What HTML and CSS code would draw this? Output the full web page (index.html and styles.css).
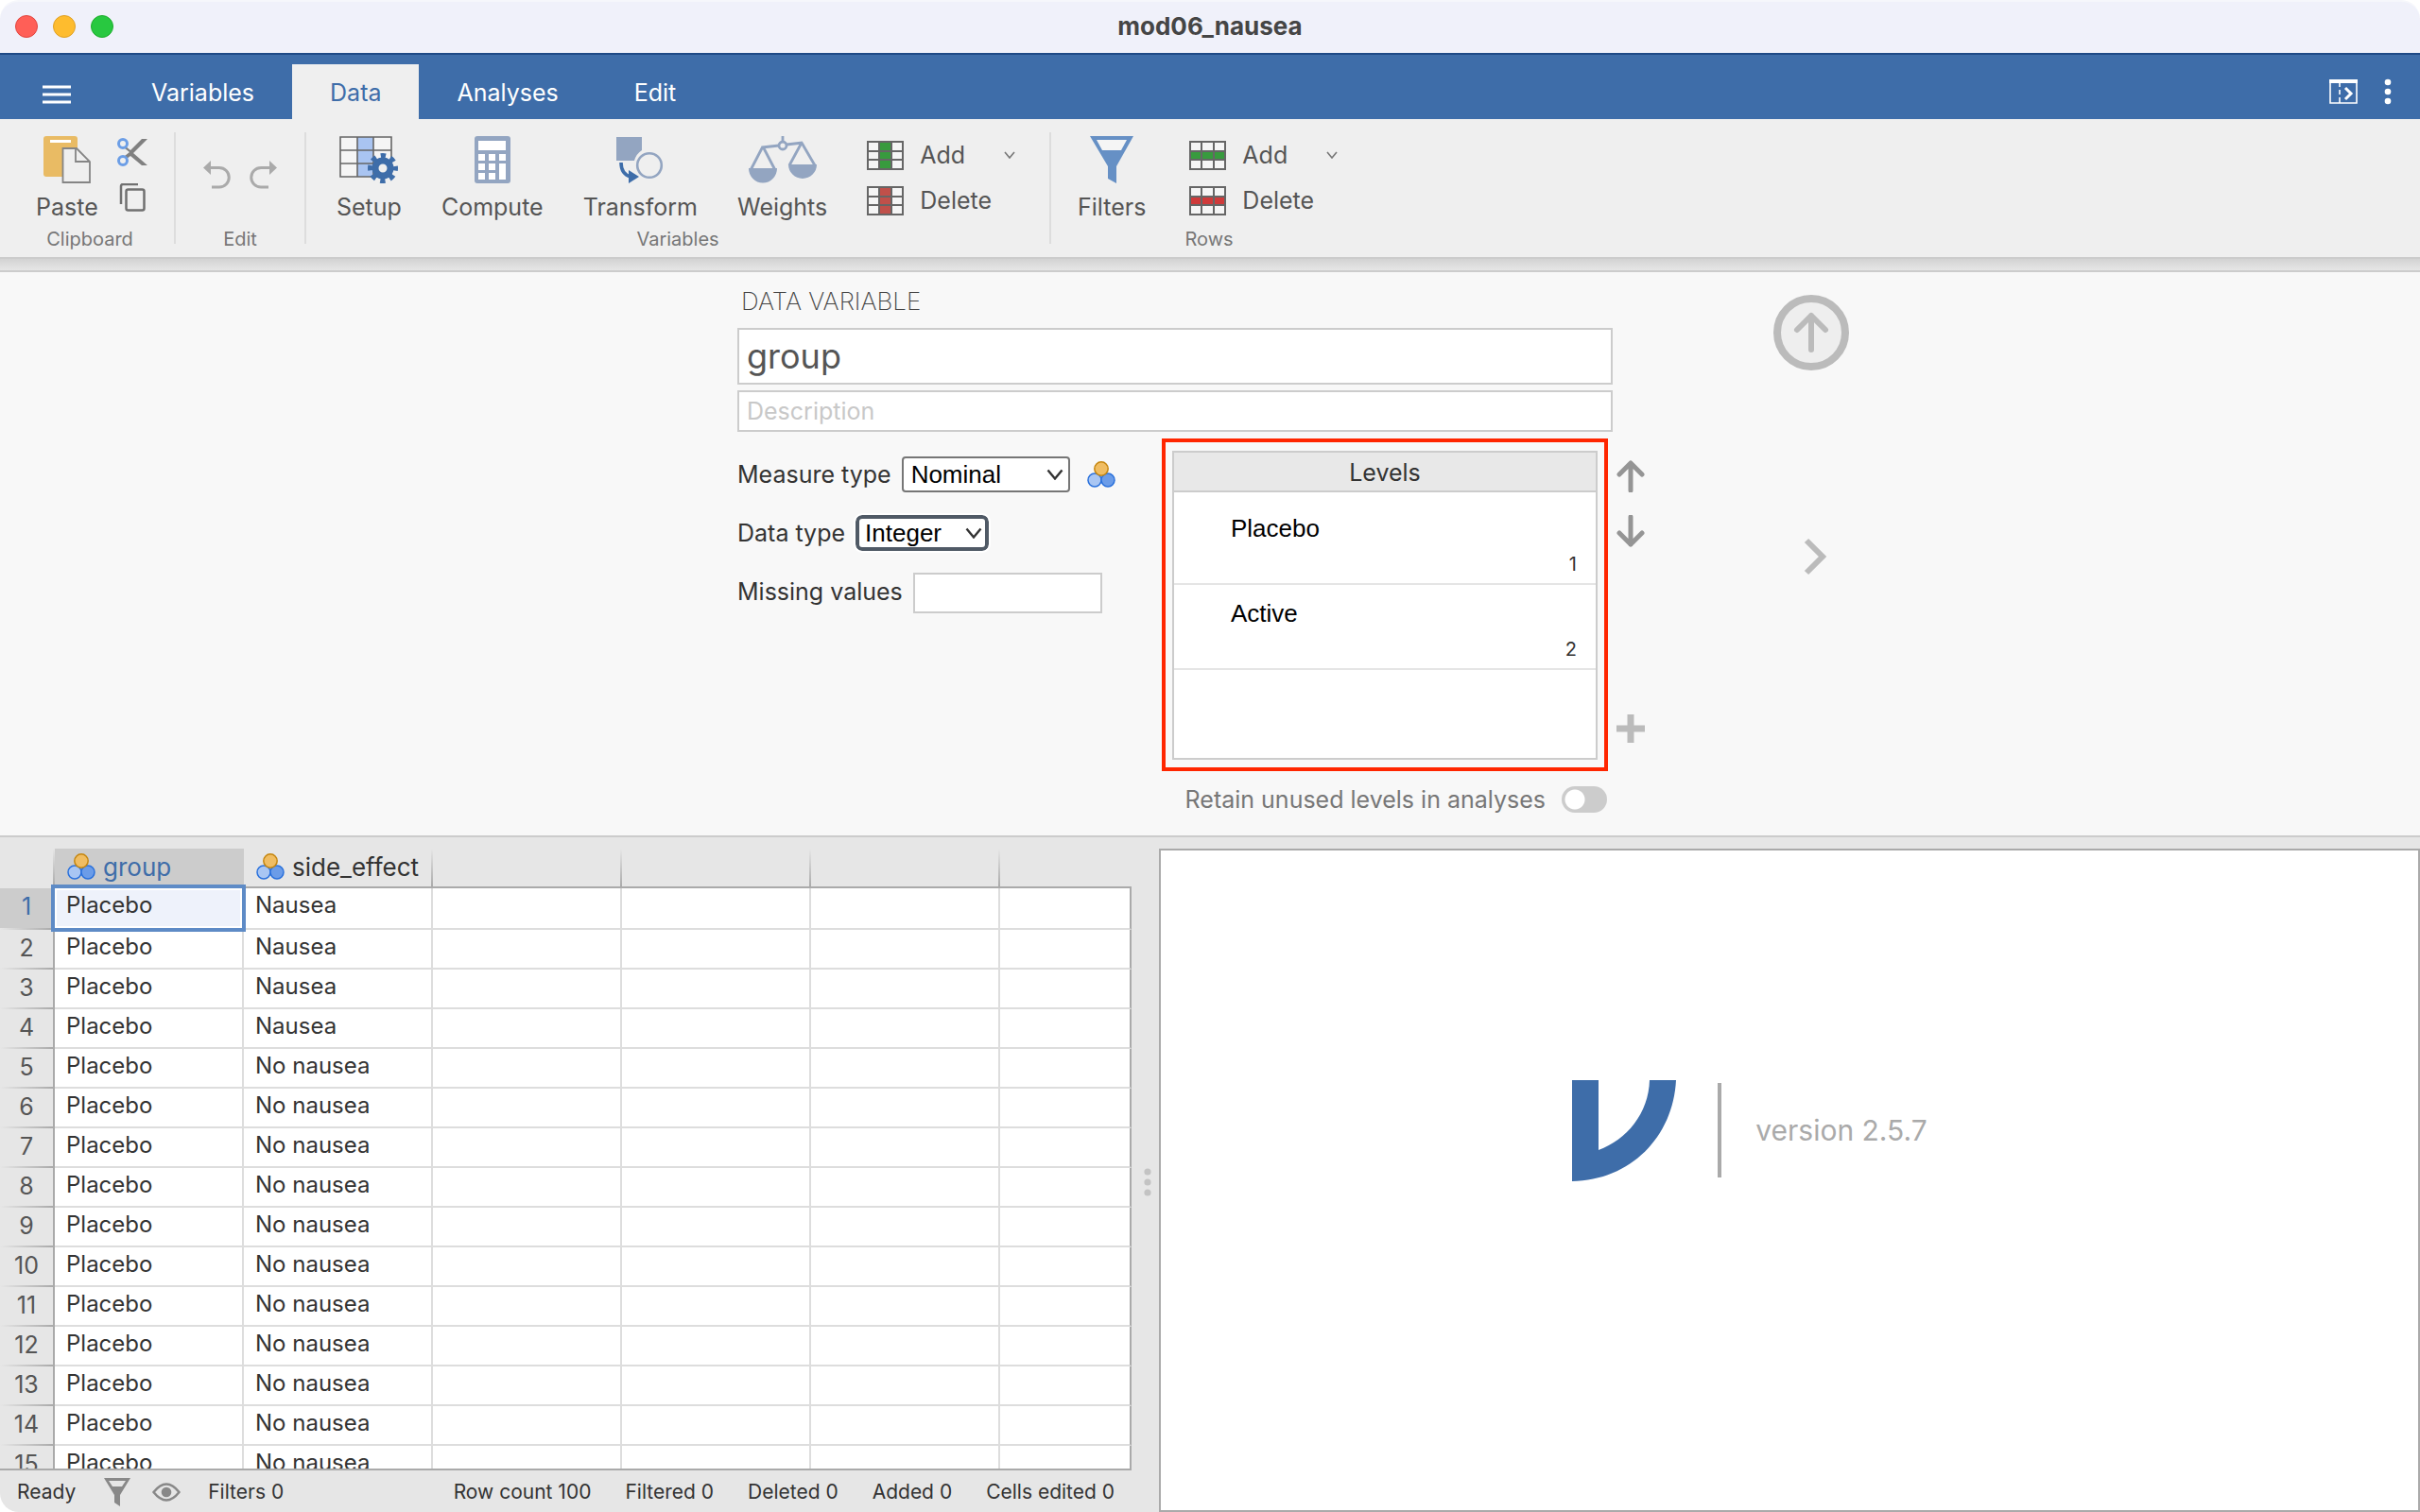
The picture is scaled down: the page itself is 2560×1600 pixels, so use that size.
FILE: index.html
```html
<!DOCTYPE html>
<html lang="en">
<head>
  <meta charset="UTF-8" />
  <meta name="viewport" content="width=device-width, initial-scale=1" />
  <title>mod06_nausea</title>
  <link rel="stylesheet" href="styles.css">
</head>
<body>

  <!-- shared icons -->
  <svg class="defs" width="0" height="0" aria-hidden="true">
    <symbol id="nominal" viewBox="0 0 30 28">
      <circle cx="8" cy="20" r="7" fill="#a9c6f3" stroke="#2a71dc" stroke-width="1.5"/>
      <circle cx="22" cy="20" r="7" fill="#6b9ce8" stroke="#2a71dc" stroke-width="1.5"/>
      <circle cx="15" cy="8" r="7.2" fill="#f0bd62" stroke="#c5860f" stroke-width="1.5"/>
    </symbol>
    <symbol id="chevron" viewBox="0 0 12 8">
      <path d="M1 1l5 6 5-6" fill="none" stroke="currentColor" stroke-width="1.6"/>
    </symbol>
    <symbol id="grid" viewBox="0 0 39 31">
      <path d="M1 1h37v29H1zM1 11h37M1 20h37M13 1v29M26 1v29" fill="none" stroke="#666" stroke-width="2"/>
    </symbol>
  </svg>

  <header class="titlebar">
    <div class="lights">
      <span class="light red"></span>
      <span class="light yellow"></span>
      <span class="light green"></span>
    </div>
    <h1>mod06_nausea</h1>
  </header>

  <nav class="tabs" aria-label="Main">
    <button class="menu" aria-label="Menu">
      <svg width="30" height="20" viewBox="0 0 30 20"><path d="M0 2h30M0 10h30M0 18h30" stroke="#fff" stroke-width="3"/></svg>
    </button>
    <button class="tab">Variables</button>
    <button class="tab active">Data</button>
    <button class="tab">Analyses</button>
    <button class="tab">Edit</button>
    <div class="tab-tools">
      <button aria-label="Toggle results">
        <svg width="30" height="26" viewBox="0 0 30 26"><path d="M1 1v24h28V1M11 4v4M11 11v5M11 19v6" fill="none" stroke="#fff" stroke-width="1.6"/><path d="M0 2h30" stroke="#fff" stroke-width="4"/><path d="M17 9l6 6-6 6" fill="none" stroke="#fff" stroke-width="3"/></svg>
      </button>
      <button aria-label="More">
        <svg width="8" height="28" viewBox="0 0 8 28" fill="#fff"><circle cx="4" cy="4" r="3.3"/><circle cx="4" cy="14" r="3.3"/><circle cx="4" cy="24" r="3.3"/></svg>
      </button>
    </div>
  </nav>

  <div class="toolbar">
    <section class="tool-group clipboard">
      <div class="tools">
        <button class="tool">
          <svg width="50" height="50" viewBox="0 0 50 50"><path d="M3 0h30a3 3 0 0 1 3 3v37a3 3 0 0 1-3 3H3a3 3 0 0 1-3-3V3a3 3 0 0 1 3-3z" fill="#e9bb64"/><path d="M7 5.500h22" stroke="#fff" stroke-width="3"/><path d="M20.500 13H35l14 14v22H20.500z" fill="#efefef" stroke="#858585" stroke-width="1.800"/><path d="M34 13v14h15" fill="none" stroke="#858585" stroke-width="1.800"/></svg>
          Paste
        </button>
        <div class="stack">
          <button aria-label="Cut">
            <svg width="32" height="30" viewBox="0 0 32 30"><path d="M9 9l5 4L26 1h6L17 16l15 13h-6L14 19l-4 3-2-3 5-4-5-4z" fill="#808080"/><circle cx="6" cy="6" r="4.500" fill="none" stroke="#6c9ee6" stroke-width="3"/><circle cx="6" cy="24" r="4.500" fill="none" stroke="#6c9ee6" stroke-width="3"/></svg>
          </button>
          <button aria-label="Copy">
            <svg width="32" height="30" viewBox="0 0 32 30"><path d="M4 22V3a2 2 0 0 1 2-2H22" fill="none" stroke="#707070" stroke-width="2.500"/><rect x="9.500" y="6.500" width="19" height="22" rx="2" fill="none" stroke="#707070" stroke-width="2.500"/></svg>
          </button>
        </div>
      </div>
      <h2>Clipboard</h2>
    </section>

    <section class="tool-group edit">
      <div class="tools">
        <button aria-label="Undo"><svg width="30" height="30" viewBox="0 0 30 30"><path d="M5 7.500h12a10 10 0 0 1 0 20.500H9" fill="none" stroke="#aaa" stroke-width="3"/><path d="M0 7.500L8 0v15z" fill="#aaa"/></svg></button>
        <button aria-label="Redo"><svg width="30" height="30" viewBox="0 0 30 30"><path d="M25 7.500H13a10 10 0 0 0 0 20.500h8" fill="none" stroke="#aaa" stroke-width="3"/><path d="M30 7.500L22 0v15z" fill="#aaa"/></svg></button>
      </div>
      <h2>Edit</h2>
    </section>

    <section class="tool-group variables">
      <div class="tools">
        <button class="tool">
          <svg width="62" height="50" viewBox="0 0 62 50"><path d="M1 1h54v42H1z" fill="#f5f5f5"/><path d="M19 1h17v42H19z" fill="#a9c4f1"/><path d="M1 1h54v42H1zM1 15h54M1 29h54M19 1v42M36 1v42" fill="none" stroke="#666" stroke-width="1.600"/><circle cx="46" cy="34" r="8" fill="#efefef" stroke="#3e6da9" stroke-width="7"/><circle cx="46" cy="34" r="13" fill="none" stroke="#3e6da9" stroke-width="6" stroke-dasharray="5.200 5.010" stroke-dashoffset="2.600"/></svg>
          Setup
        </button>
        <button class="tool">
          <svg width="38" height="50" viewBox="0 0 38 50"><rect width="38" height="50" rx="3" fill="#93a5c1"/><path d="M4 5h29v10H4zM4 19h7v7H4zM15 19h7v7h-7zM26 19h7v7h-7zM4 29h7v7H4zM15 29h7v7h-7zM26 29h7v17h-7zM4 39h7v7H4zM15 39h7v7h-7z" fill="#fff"/></svg>
          Compute
        </button>
        <button class="tool">
          <svg width="50" height="50" viewBox="0 0 50 50"><path d="M0 1h27v14a19 19 0 0 0-8 11H0z" fill="#93a5c1"/><circle cx="35" cy="31" r="12.800" fill="none" stroke="#93a5c1" stroke-width="2.600"/><path d="M5 28c0 8 3 13 10 15" fill="none" stroke="#3e6da9" stroke-width="3.600"/><path d="M13 36l11 7-11 7z" fill="#3e6da9"/></svg>
          Transform
        </button>
        <button class="tool">
          <svg width="72" height="50" viewBox="0 0 72 50"><g fill="none" stroke="#93a5c1" stroke-width="2.800"><path d="M36 0v7M14 12l18-2M40 9l17-2M15 11L2 36M15 11l13 25M56 7L43 31M56 7l14 24"/><circle cx="36" cy="10" r="4"/></g><path d="M0 34h30a15 15.500 0 0 1-30 0zM42 30h30a15 15 0 0 1-30 0z" fill="#93a5c1"/></svg>
          Weights
        </button>
        <div class="stack wide">
          <button class="row-tool"><svg width="39" height="31" viewBox="0 0 39 31"><path d="M1 1h37v29H1z" fill="#f5f5f5"/><path d="M13 1h13v29H13z" fill="#389b3e"/><use href="#grid"/></svg>Add <svg class="drop" width="12" height="8"><use href="#chevron"/></svg></button>
          <button class="row-tool"><svg width="39" height="31" viewBox="0 0 39 31"><path d="M1 1h37v29H1z" fill="#f5f5f5"/><path d="M13 1h13v29H13z" fill="#c0504a"/><use href="#grid"/></svg>Delete</button>
        </div>
      </div>
      <h2>Variables</h2>
    </section>

    <section class="tool-group rows">
      <div class="tools">
        <button class="tool">
          <svg width="46" height="50" viewBox="0 0 46 50"><path d="M0 0h46L28 32v18l-9-5V32z" fill="#6690c5"/><path d="M7 4h32l-6 11H13z" fill="#f5f5f5"/></svg>
          Filters
        </button>
        <div class="stack wide">
          <button class="row-tool"><svg width="39" height="31" viewBox="0 0 39 31"><path d="M1 1h37v29H1z" fill="#f5f5f5"/><path d="M1 11h37v9H1z" fill="#389b3e"/><use href="#grid"/></svg>Add <svg class="drop" width="12" height="8"><use href="#chevron"/></svg></button>
          <button class="row-tool"><svg width="39" height="31" viewBox="0 0 39 31"><path d="M1 1h37v29H1z" fill="#f5f5f5"/><path d="M1 11h37v9H1z" fill="#cf3a3a"/><use href="#grid"/></svg>Delete</button>
        </div>
      </div>
      <h2>Rows</h2>
    </section>
  </div>
  <div class="shade"></div>

  <section class="editor">
    <div class="editor-main">
      <h2>DATA VARIABLE</h2>
      <input class="name" type="text" aria-label="Name" value="group">
      <input class="description" type="text" aria-label="Description" placeholder="Description">
      <div class="settings">
        <div class="fields">
          <div class="field">
            <label for="measure">Measure type</label>
            <div class="select measure">
              <select id="measure"><option>Nominal</option><option>Ordinal</option><option>Continuous</option><option>ID</option></select>
              <svg width="18" height="12"><use href="#chevron"/></svg>
            </div>
            <svg class="type-icon" width="30" height="28"><use href="#nominal"/></svg>
          </div>
          <div class="field">
            <label for="dtype">Data type</label>
            <div class="select dtype">
              <select id="dtype"><option>Integer</option><option>Decimal</option><option>Text</option></select>
              <svg width="18" height="12"><use href="#chevron"/></svg>
            </div>
          </div>
          <div class="field">
            <label for="missing">Missing values</label>
            <input id="missing" class="missing" type="text">
          </div>
        </div>

        <div class="levels-side">
          <div class="levels-mark">
            <div class="levels">
              <h3>Levels</h3>
              <div class="level"><span>Placebo</span><small>1</small></div>
              <div class="level"><span>Active</span><small>2</small></div>
            </div>
          </div>
          <div class="retain">
            <label for="retain">Retain unused levels in analyses</label>
            <input id="retain" type="checkbox" role="switch">
          </div>
        </div>

        <div class="level-tools">
          <button aria-label="Move up"><svg width="30" height="34" viewBox="0 0 30 34"><path d="M15 32V3M3 15L15 3l12 12" fill="none" stroke="#959595" stroke-width="5" stroke-linecap="round" stroke-linejoin="round"/></svg></button>
          <button aria-label="Move down"><svg width="30" height="34" viewBox="0 0 30 34"><path d="M15 2v29M3 19l12 12 12-12" fill="none" stroke="#959595" stroke-width="5" stroke-linecap="round" stroke-linejoin="round"/></svg></button>
          <button class="add-level" aria-label="Add level"><svg width="30" height="30" viewBox="0 0 30 30"><path d="M15 0v30M0 15h30" stroke="#bbb" stroke-width="7"/></svg></button>
        </div>
      </div>
    </div>

    <div class="editor-nav">
      <button class="close" aria-label="Close"><svg width="80" height="80" viewBox="0 0 80 80"><circle cx="40" cy="40" r="36" fill="#eee" stroke="#bbb" stroke-width="8"/><path d="M40 58V22M25 37l15-15 15 15" fill="none" stroke="#bbb" stroke-width="6" stroke-linecap="round" stroke-linejoin="round"/></svg></button>
      <button aria-label="Next"><svg width="34" height="40" viewBox="0 0 34 40"><path d="M12 3l17 17-17 17" fill="none" stroke="#bbb" stroke-width="6"/></svg></button>
    </div>
  </section>

  <main class="split">
    <div class="data">
      <div class="sheet">
        <table>
          <colgroup><col class="num-col"><col class="var-col"><col class="var-col"><col class="var-col"><col class="var-col"><col class="var-col"><col></colgroup>
          <thead>
            <tr>
              <th></th>
              <th class="active"><svg width="30" height="28"><use href="#nominal"/></svg>group</th>
              <th><svg width="30" height="28"><use href="#nominal"/></svg>side_effect</th>
              <th></th><th></th><th></th><th></th>
            </tr>
          </thead>
          <tbody id="rows"></tbody>
        </table>
      </div>
      <footer class="status">
        <span>Ready</span>
        <svg class="funnel" width="28" height="30" viewBox="0 0 28 30"><path d="M0 0h28L17 18v12l-6-4v-8z" fill="#888"/><path d="M5 3h18l-4 6H9z" fill="#e6e6e6"/></svg>
        <svg class="eye" width="30" height="20" viewBox="0 0 30 20"><path d="M1.500 10Q15-7 28.500 10 15 27 1.500 10z" fill="none" stroke="#888" stroke-width="2.500"/><circle cx="15" cy="10" r="5.300" fill="#888"/></svg>
        <span>Filters 0</span>
        <div class="counts">
          <span>Row count 100</span>
          <span>Filtered 0</span>
          <span>Deleted 0</span>
          <span>Added 0</span>
          <span>Cells edited 0</span>
        </div>
      </footer>
    </div>

    <div class="splitter">
      <svg width="8" height="30" viewBox="0 0 8 30" fill="#c3c3c3"><circle cx="4" cy="4" r="3.600"/><circle cx="4" cy="15" r="3.600"/><circle cx="4" cy="26" r="3.600"/></svg>
    </div>

    <div class="results">
      <svg width="110" height="107" viewBox="0 0 110 107"><path d="M0 0h28v74C58 63 81 35 82 0h28C107 60 62 106 0 107z" fill="#3e6da9"/></svg>
      <p>version 2.5.7</p>
    </div>
  </main>

  <script>
    const labels = ['Nausea', 'Nausea', 'Nausea', 'Nausea'];
    const body = document.getElementById('rows');
    for (let i = 0; i < 15; i++) {
      const tr = document.createElement('tr');
      if (i === 0) tr.className = 'current';
      tr.innerHTML = `
        <th scope="row">${i + 1}</th>
        <td>Placebo</td>
        <td>${labels[i] || 'No nausea'}</td>
        <td></td><td></td><td></td><td></td>
      `;
      body.appendChild(tr);
    }
  </script>
</body>
</html>
```
FILE: styles.css
```css
* {
  box-sizing: border-box;
}
body {
  margin: 0;
  height: 100vh;
  display: flex;
  flex-direction: column;
  overflow: hidden;
  background: #fff;
  color: #333;
  font-family: Inter, 'Liberation Sans', sans-serif;
  font-size: 25px;
  line-height: 32px;
}
button {
  padding: 0;
  border: none;
  background: none;
  color: inherit;
  font: inherit;
  cursor: pointer;
}
svg {
  display: block;
  flex: none;
}
h1, h2, h3, p {
  margin: 0;
  font-weight: 400;
}
.defs {
  position: absolute;
}

/* title bar */
.titlebar {
  display: grid;
  grid-template-columns: 1fr auto 1fr;
  align-items: center;
  height: 56px;
  padding: 0 16px 2px;
  background: #f0f1fa;
  border-top: 2px solid #f6f7fb;
  border-radius: 20px 20px 0 0;
}
.titlebar h1 {
  font-size: 26px;
  font-weight: 700;
  color: #454545;
}
.lights {
  display: flex;
  gap: 16px;
}
.light {
  width: 24px;
  height: 24px;
  border-radius: 50%;
  border: 1px solid #e14640;
  background: #ff5f57;
}
.yellow {
  border-color: #dfa023;
  background: #febc2e;
}
.green {
  border-color: #1dad2b;
  background: #28c840;
}

/* tabs */
.tabs {
  display: flex;
  align-items: flex-end;
  height: 70px;
  background: #3e6da9;
  border-top: 2px solid #1f4a86;
  color: #fff;
}
.tabs .menu {
  width: 120px;
  height: 58px;
  padding: 6px 0 0 45px;
}
.tab {
  height: 58px;
  padding: 2px 40px 0;
}
.tab.active {
  background: #efefef;
  color: #3e6da9;
}
.tab-tools {
  display: flex;
  align-items: center;
  gap: 28px;
  height: 58px;
  margin-left: auto;
  padding-right: 30px;
}

/* toolbar */
.toolbar {
  display: flex;
  height: 148px;
  padding: 14px 0 14px 6px;
  background: #efefef;
  border-bottom: 2px solid #ccc;
  color: #555;
}
.shade {
  height: 12px;
  background: linear-gradient(#d3d3d3, #e6e6e6);
}
.tool-group {
  display: flex;
  flex-direction: column;
  align-items: center;
  justify-content: space-between;
  border-right: 2px solid #ddd;
}
.tool-group:last-child {
  border-right: none;
}
.tool-group h2 {
  font-size: 20px;
  line-height: 10px;
  color: #777;
}
.tools {
  display: flex;
  width: 100%;
  padding: 4px 0 0 32px;
}
.clipboard {
  width: 180px;
}
.clipboard .tools {
  gap: 20px;
}
.edit {
  width: 138px;
}
.edit .tools {
  gap: 18px;
  padding: 30px 0 0 29px;
}
.variables {
  width: 788px;
}
.variables .tools {
  gap: 42px;
}
.rows {
  width: 334px;
}
.rows .tools {
  gap: 46px;
  padding-left: 28px;
}
.tool {
  display: flex;
  flex-direction: column;
  align-items: center;
  gap: 9px;
}
.stack {
  display: flex;
  flex-direction: column;
  gap: 18px;
  padding-top: 2px;
}
.stack.wide {
  gap: 16px;
  padding-top: 4px;
}
.row-tool {
  display: flex;
  align-items: center;
  gap: 17px;
}
.drop {
  margin-left: 24px;
  color: #777;
}

/* variable editor */
.editor {
  display: grid;
  grid-template-columns: 1000px 1fr;
  height: 600px;
  padding: 12px 0 0 calc(50% - 500px);
  border-top: 2px solid #ccc;
  border-bottom: 2px solid #ccc;
  background: #f8f8f8;
}
.editor-main h2 {
  padding: 2px 0 0 4px;
  height: 47px;
  font-size: 26px;
  font-weight: 200;
  line-height: 34px;
  color: #444;
}
.editor-main input[type=text] {
  display: block;
  padding: 0 8px;
  border: 2px solid #ccc;
  background: #fff;
  font-family: inherit;
  font-size: 25px;
  color: #555;
}
.editor-main input.name {
  width: 926px;
  height: 60px;
  font-size: 36px;
}
.editor-main .description {
  width: 926px;
  height: 44px;
  margin-top: 6px;
}
.description::placeholder {
  color: #c8c8c8;
}
.settings {
  display: flex;
  padding-top: 7px;
}
.fields {
  width: 449px;
  padding-top: 19px;
}
.field {
  display: flex;
  align-items: center;
  height: 38px;
  margin-bottom: 24px;
}
.select {
  position: relative;
  margin-left: 11px;
}
.select select {
  appearance: none;
  width: 100%;
  height: 38px;
  padding: 0 8px;
  border: 2px solid #767676;
  border-radius: 4px;
  background: #fff;
  color: #000;
  font: 26px 'Liberation Sans', sans-serif;
}
.select svg {
  position: absolute;
  right: 7px;
  top: 13px;
  pointer-events: none;
}
.measure {
  width: 178px;
}
.dtype {
  width: 141px;
}
.dtype select {
  padding: 0 6px;
  border: 4px solid #505a66;
  border-radius: 7px;
  outline: 2px solid #fff;
}
.type-icon {
  margin-left: 18px;
}
.editor-main .missing {
  width: 200px;
  height: 43px;
  margin: 3px 0 0 11px;
  border-color: #ddd;
}
.levels-mark {
  width: 472px;
  height: 352px;
  padding: 9px 7px;
  border: 4px solid #ff2600;
}
.levels {
  height: 327px;
  border: 2px solid #ccc;
  background: #fff;
}
.levels h3 {
  height: 42px;
  border-bottom: 2px solid #ccc;
  background: #e8e8e8;
  font-size: 25px;
  line-height: 42px;
  text-align: center;
}
.level {
  display: flex;
  flex-direction: column;
  height: 90px;
  padding: 12px 20px 0 60px;
  border-bottom: 2px solid #e5e5e5;
}
.level:nth-child(2) {
  height: 98px;
  padding-top: 20px;
}
.level span {
  color: #000;
  font-family: 'Liberation Sans', sans-serif;
  font-size: 26px;
  line-height: 36px;
}
.level small {
  font-size: 20px;
  line-height: 40px;
  text-align: right;
}
.retain {
  display: flex;
  align-items: center;
  justify-content: flex-end;
  gap: 17px;
  padding: 14px 1px 0 0;
  color: #777;
}
.retain input {
  appearance: none;
  width: 48px;
  height: 28px;
  margin: 0;
  border-radius: 14px;
  background: radial-gradient(circle at 14px 14px, #fff 10px, #ccc 11px);
}
.level-tools {
  display: flex;
  flex-direction: column;
  gap: 24px;
  height: 322px;
  padding: 23px 0 0 9px;
}
.add-level {
  margin-top: auto;
}
.editor-nav {
  display: flex;
  flex-direction: column;
  align-items: center;
  gap: 177px;
  width: 80px;
  margin-left: 96px;
  padding-top: 12px;
}

/* sheet and results */
.split {
  flex: 1;
  display: grid;
  grid-template-columns: 1197fr 29px 1334fr;
  min-height: 0;
  padding-top: 12px;
  background: #e6e6e6;
  border-bottom-left-radius: 20px;
}
.data {
  display: flex;
  flex-direction: column;
  min-height: 0;
}
.sheet {
  flex: 1;
  min-height: 0;
  overflow: hidden;
  border-bottom: 2px solid #aaa;
}
table {
  width: 100%;
  table-layout: fixed;
  border-collapse: separate;
  border-spacing: 0;
}
.num-col {
  width: 58px;
}
.var-col {
  width: 200px;
}
th, td {
  padding: 0;
  text-align: left;
  vertical-align: top;
  font-weight: 400;
}
thead th {
  height: 42px;
  padding-left: 13px;
  border-bottom: 2px solid #aaa;
  background: linear-gradient(#e6e6e6, #aaa) right / 2px 100% no-repeat;
  font-size: 26px;
  line-height: 40px;
}
thead th:first-child {
  border-color: transparent;
}
thead th:last-child {
  background: none;
}
thead th.active {
  background: #ccc;
  color: #3e6da9;
}
thead svg {
  float: left;
  margin: 5px 8px 0 0;
}
tbody th {
  border-right: 2px solid #aaa;
  background: linear-gradient(to right, #e6e6e6, #aaa) bottom / 100% 2px no-repeat;
  color: #555;
  line-height: 38px;
  text-align: center;
}
tbody td {
  height: 42px;
  padding-left: 12px;
  border-right: 2px solid #ddd;
  border-bottom: 2px solid #ddd;
  background: #fff;
  font-size: 24px;
  line-height: 36px;
}
tbody td:last-child {
  border-right-color: #aaa;
}
.current td {
  height: 44px;
}
.current th {
  background-color: #ccc;
  color: #3e6da9;
}
.current td:nth-child(2) {
  position: relative;
  background: #eef2fb;
}
.current td:nth-child(2)::after {
  content: '';
  position: absolute;
  inset: -4px;
  border: 4px solid #5e8bc6;
  box-shadow: inset 0 0 0 2px #fff;
}
.status {
  display: flex;
  align-items: center;
  height: 44px;
  padding: 2px 18px 0;
  font-size: 21px;
}
.funnel {
  margin-left: 30px;
}
.eye {
  margin: 0 29px 0 23px;
}
.counts {
  display: flex;
  gap: 36px;
  margin-left: auto;
}
.splitter {
  display: flex;
  align-items: center;
  justify-content: center;
  padding: 4px 0 0 5px;
}
.results {
  display: flex;
  align-items: center;
  justify-content: center;
  gap: 44px;
  padding: 0 84px 106px 0;
  border: 2px solid #aaa;
  background: #fff;
}
.results p {
  padding-left: 36px;
  border-left: 4px solid #aaa;
  color: #aaa;
  font-size: 30px;
  line-height: 100px;
}
```
